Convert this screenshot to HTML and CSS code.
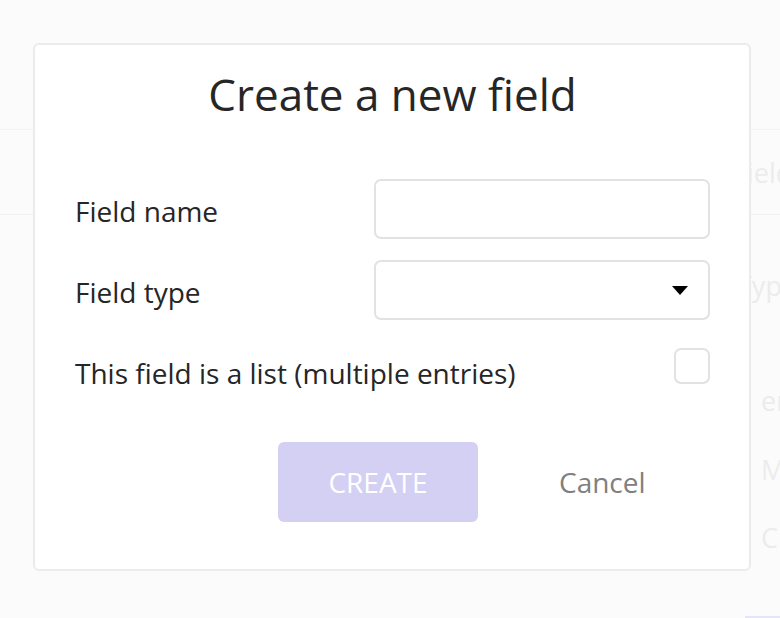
FILE: index.html
```html
<!DOCTYPE html>
<html>
<head>
<meta charset="utf-8">
<link rel="stylesheet" href="styles.css">
</head>
<body>
<div class="page">
  <div class="page-head"></div>
  <div class="page-row row-a"><span class="bg-text col-a">Field</span></div>
  <div class="page-band"></div>
  <div class="page-row row-b"><span class="bg-text col-t">Type</span></div>
  <div class="page-row row-c"><span class="bg-text col-b">entries</span></div>
  <div class="page-row row-d"><span class="bg-text col-b">Multiple</span></div>
  <div class="page-row row-e"><span class="bg-text col-b">Create</span></div>
  <div class="page-foot"><span class="foot-bar"></span></div>
</div>

<div class="modal">
  <h1 class="title">Create a new field</h1>
  <div class="form">
    <div class="row">
      <span class="label">Field name</span>
      <div class="input"></div>
    </div>
    <div class="row">
      <span class="label">Field type</span>
      <div class="input select">
        <svg class="caret" width="16" height="9" viewBox="0 0 16 9"><path d="M0 0H16L8 9Z" fill="#000"/></svg>
      </div>
    </div>
    <div class="row row-check">
      <span class="label">This field is a list (multiple entries)</span>
      <div class="checkbox"></div>
    </div>
  </div>
  <div class="actions">
    <button class="btn-create">CREATE</button>
    <span class="btn-cancel">Cancel</span>
  </div>
</div>
</body>
</html>
```
FILE: styles.css
```css
html, body {
  margin: 0;
  padding: 0;
}
body {
  width: 780px;
  height: 618px;
  overflow: hidden;
  background: #fbfbfb;
  font-family: "Open Sans", "Noto Sans", sans-serif;
  position: relative;
}
.page {
  display: flex;
  flex-direction: column;
  height: 618px;
}
.page-head {
  height: 130px;
  border-bottom: 1px solid #f3f3f3;
  box-sizing: border-box;
}
.page-row {
  display: flex;
  align-items: center;
}
.row-a {
  height: 85px;
  border-bottom: 1px solid #f1f1f1;
  box-sizing: border-box;
}
.page-band {
  height: 40px;
}
.row-b { height: 110px; align-items: flex-start; }
.row-c { height: 70px; }
.row-d { height: 68px; }
.row-e { height: 68px; }
.bg-text {
  font-size: 27px;
  color: #ececec;
  white-space: nowrap;
}
.col-a { padding-left: 733px; }
.col-t { padding-left: 737px; }
.col-b { padding-left: 761px; }
.row-b .bg-text { margin-top: 12px; }
.page-foot {
  flex: 1;
  display: flex;
  align-items: flex-end;
  justify-content: flex-end;
}
.foot-bar {
  width: 35px;
  height: 2px;
  background: #e6e4f8;
}

.modal {
  position: absolute;
  left: 33px;
  top: 43px;
  width: 718px;
  height: 528px;
  box-sizing: border-box;
  background: #fff;
  border: 2px solid #ebebeb;
  border-radius: 6px;
  padding: 0 39px 0 40px;
  display: flex;
  flex-direction: column;
}
.title {
  margin: 19px 0 0;
  text-align: center;
  font-size: 44px;
  font-weight: 400;
  line-height: 60px;
  color: #262626;
}
.form {
  margin-top: 55px;
  display: flex;
  flex-direction: column;
  gap: 21px;
}
.row {
  display: grid;
  grid-template-columns: 299px 1fr;
  align-items: center;
  height: 60px;
}
.label {
  font-size: 28px;
  color: #262626;
  white-space: nowrap;
  padding-top: 3px;
}
.input {
  height: 60px;
  box-sizing: border-box;
  border: 2px solid #e2e2e2;
  border-radius: 7px;
  background: #fff;
}
.select {
  display: flex;
  align-items: center;
  justify-content: flex-end;
  padding-right: 20px;
}
.caret {
  display: block;
}
.row-check .checkbox {
  justify-self: end;
  align-self: start;
  margin-top: 7px;
  width: 36px;
  height: 36px;
  box-sizing: border-box;
  border: 2px solid #e2e2e2;
  border-radius: 7px;
}
.actions {
  margin-top: 41px;
  display: flex;
  align-items: center;
  padding-left: 203px;
}
.btn-create {
  width: 200px;
  height: 80px;
  border: none;
  border-radius: 6px;
  background: #d3d0f3;
  color: #fff;
  font-family: inherit;
  font-size: 28px;
  padding: 0;
}
.btn-cancel {
  margin-left: 81px;
  font-size: 28px;
  color: #808080;
}
```
